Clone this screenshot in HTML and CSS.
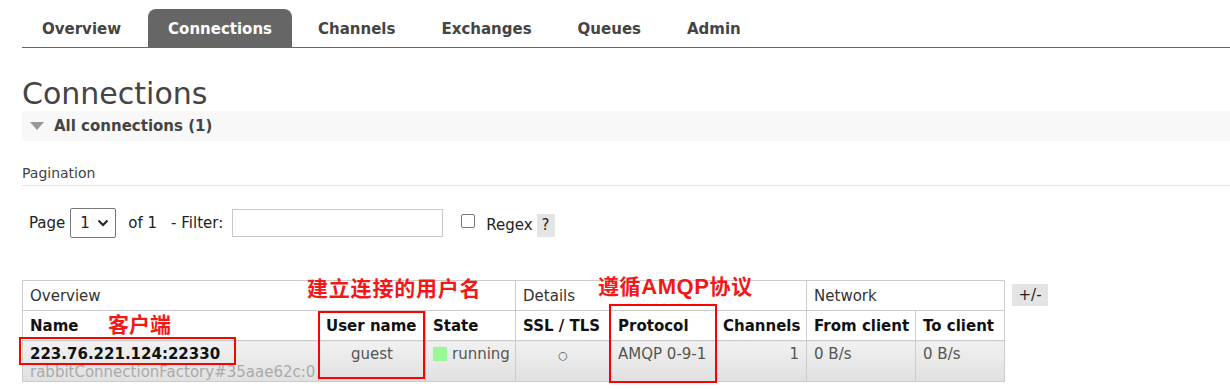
FILE: index.html
```html
<!DOCTYPE html>
<html>
<head>
<meta charset="utf-8">
<link rel="stylesheet" href="styles.css">
</head>
<body>
<div class="nav">
  <a class="tab">Overview</a>
  <a class="tab active">Connections</a>
  <a class="tab">Channels</a>
  <a class="tab">Exchanges</a>
  <a class="tab">Queues</a>
  <a class="tab">Admin</a>
</div>
<div class="main">
  <h1 class="title">Connections</h1>
  <div class="section-head"><span class="tri"></span><span>All connections (1)</span></div>
  <div class="pag-title">Pagination</div>
  <div class="pag-row">
    <span>Page</span>
    <span class="select"><span>1</span><svg width="12" height="8" viewBox="0 0 12 8"><path d="M1.5 1.5 L6 6 L10.5 1.5" fill="none" stroke="#222" stroke-width="2"/></svg></span>
    <span class="of">of 1</span>
    <span class="flt">- Filter:</span>
    <span class="input"></span>
    <span class="check"></span>
    <span class="regex">Regex</span>
    <span class="help">?</span>
  </div>
  <div class="table-wrap">
    <table class="list">
      <colgroup>
        <col class="c1"><col class="c2"><col class="c3"><col class="c4"><col class="c5"><col class="c6"><col class="c7"><col class="c8">
      </colgroup>
      <tr class="group">
        <th colspan="3">Overview</th>
        <th colspan="3">Details</th>
        <th colspan="2">Network</th>
      </tr>
      <tr class="heads">
        <th>Name</th><th>User name</th><th>State</th><th>SSL / TLS</th><th>Protocol</th><th>Channels</th><th>From client</th><th>To client</th>
      </tr>
      <tr class="data">
        <td><div class="conn">223.76.221.124:22330</div><div class="sub">rabbitConnectionFactory#35aae62c:0</div></td>
        <td class="center">guest</td>
        <td><span class="state"><span class="dot"></span>running</span></td>
        <td class="center"><span class="circle">○</span></td>
        <td>AMQP 0-9-1</td>
        <td class="right">1</td>
        <td>0 B/s</td>
        <td>0 B/s</td>
      </tr>
    </table>
    <span class="pm">+/-</span>
    <span class="note n1">客户端</span>
    <span class="note n2">建立连接的用户名</span>
    <span class="note n3">遵循<span class="lat">AMQP</span>协议</span>
    <span class="box b1"></span>
    <span class="box b2"></span>
    <span class="box b3"></span>
  </div>
</div>
</body>
</html>
```
FILE: styles.css
```css
html, body {
  margin: 0;
  padding: 0;
  background: #fff;
  font-family: "DejaVu Sans", Verdana, sans-serif;
  font-size: 15px;
  color: #444;
}
.nav {
  display: flex;
  margin-left: 22px;
  padding-top: 9px;
  border-bottom: 1px solid #666;
}
.tab {
  display: block;
  padding: 11px 20px 9px 20px;
  line-height: 18px;
  margin-right: 6px;
  font-weight: bold;
  font-size: 15px;
  color: #444;
  border-radius: 8px 8px 0 0;
}
.tab:first-child { margin-right: 7px; }
.tab.active {
  background: #666;
  color: #fff;
}
.main {
  margin-left: 22px;
}
.title {
  margin: 28px 0 0 0;
  font-size: 30px;
  line-height: 35px;
  font-weight: normal;
  color: #444;
}
.section-head {
  display: flex;
  align-items: center;
  height: 30px;
  background: #f8f8f8;
  font-weight: bold;
  color: #444;
}
.tri {
  width: 0;
  height: 0;
  margin: 0 10px 0 8px;
  border-left: 7px solid transparent;
  border-right: 7px solid transparent;
  border-top: 8px solid #999;
}
.pag-title {
  margin-top: 22px;
  font-size: 14px;
  line-height: 20px;
  padding-bottom: 2px;
  border-bottom: 1px solid #e4e4e4;
  color: #444;
}
.pag-row {
  display: flex;
  align-items: center;
  margin-top: 22px;
  padding-left: 7px;
  color: #222;
  font-size: 15px;
}
.select {
  display: flex;
  align-items: center;
  justify-content: space-between;
  box-sizing: border-box;
  width: 46px;
  height: 30px;
  margin-left: 5px;
  padding: 0 6px 0 9px;
  border: 1px solid #767676;
  border-radius: 2px;
  background: #fff;
}
.of { margin-left: 12px; }
.flt { margin-left: 14px; }
.input {
  box-sizing: border-box;
  width: 211px;
  height: 28px;
  margin-left: 9px;
  border: 1px solid #c8c8c8;
}
.check {
  box-sizing: border-box;
  width: 14px;
  height: 14px;
  margin-left: 18px;
  margin-top: -4px;
  border: 1px solid #767676;
  border-radius: 2px;
}
.regex { margin-left: 11px; margin-top: 4px; }
.help {
  margin-left: 4px;
  margin-top: 5px;
  width: 18px;
  height: 23px;
  line-height: 23px;
  text-align: center;
  background: #e4e4e4;
}
.table-wrap {
  position: relative;
  display: flex;
  align-items: flex-start;
  margin-top: 42px;
  padding-bottom: 8px;
}
table.list {
  border-collapse: collapse;
  table-layout: fixed;
  width: 982px;
  font-size: 15px;
}
.c1 { width: 296px; }
.c2 { width: 107px; }
.c3 { width: 90px; }
.c4 { width: 95px; }
.c5 { width: 105px; }
.c6 { width: 91px; }
.c7 { width: 109px; }
.c8 { width: 89px; }
table.list th, table.list td {
  border: 1px solid #ccc;
  padding: 0 7px;
  text-align: left;
  white-space: nowrap;
}
tr.group th {
  height: 29px;
  font-weight: normal;
  color: #333;
}
tr.heads th {
  height: 29px;
  font-weight: bold;
  color: #111;
}
tr.data td {
  height: 41px;
  vertical-align: top;
  padding-top: 4px;
  padding-bottom: 0;
  box-sizing: border-box;
  color: #555;
  line-height: 18px;
  background: linear-gradient(#f1f1f1, #e0e0e0);
}
tr.data td.center { text-align: center; }
tr.data td.right { text-align: right; }
.conn { font-weight: bold; color: #111; line-height: 19px; }
.sub { color: #aaa; line-height: 17px; }
.state { display: inline-flex; align-items: center; }
.dot {
  display: inline-block;
  width: 14px;
  height: 14px;
  margin-right: 5px;
  background: #98f898;
}
.circle { font-size: 11px; color: #555; }
.pm {
  margin-left: 7px;
  margin-top: 4px;
  width: 36px;
  height: 22px;
  line-height: 22px;
  text-align: center;
  background: #e4e4e4;
  color: #222;
}
.note {
  position: absolute;
  color: #f21818;
  font-family: "Noto Sans CJK SC", "DejaVu Sans", sans-serif;
  font-weight: bold;
  font-size: 21px;
  line-height: 24px;
  white-space: nowrap;
}
.note .lat {
  font-family: "Liberation Sans", Arial, sans-serif;
  font-size: 22px;
  font-weight: bold;
}
.n1 { left: 86px; top: 31px; }
.n2 { left: 285px; top: -5px; letter-spacing: 0.8px; }
.n3 { left: 576px; top: -7px; letter-spacing: 0.6px; }
.box {
  position: absolute;
  border: 2px solid #f00;
  box-sizing: border-box;
}
.b1 { left: -3px; top: 57px; width: 217px; height: 28px; }
.b2 { left: 296px; top: 31px; width: 107px; height: 68px; }
.b3 { left: 587px; top: 24px; width: 108px; height: 79px; }
```
